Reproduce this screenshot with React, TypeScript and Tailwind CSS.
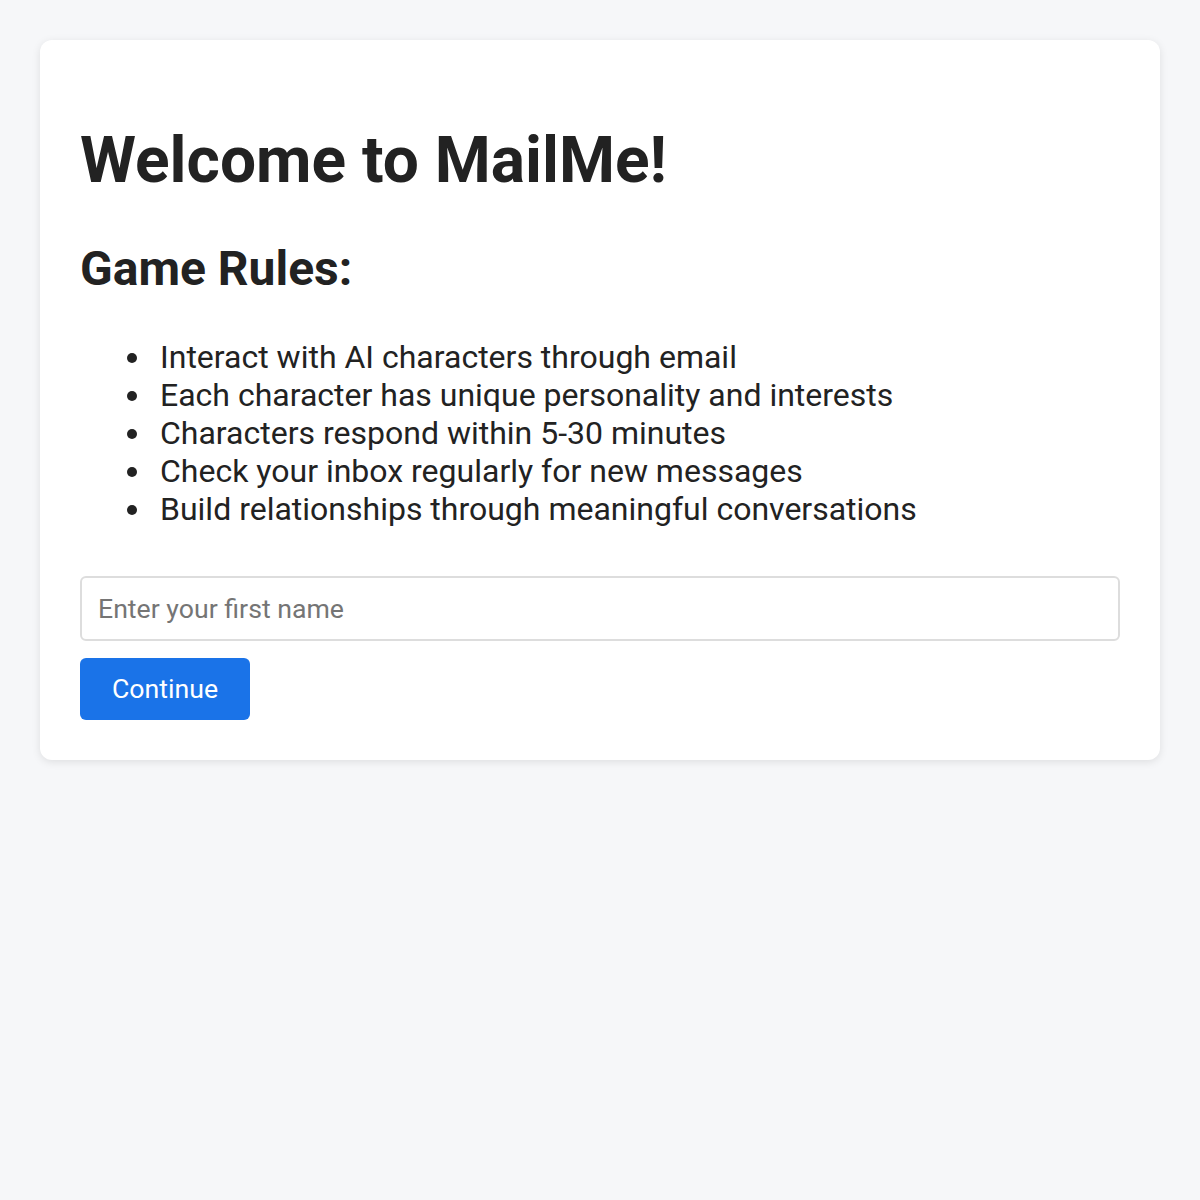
import React, { useState } from 'react';

const rules = [
  'Interact with AI characters through email',
  'Each character has unique personality and interests',
  'Characters respond within 5-30 minutes',
  'Check your inbox regularly for new messages',
  'Build relationships through meaningful conversations',
];

export default function App() {
  const [name, setName] = useState('');

  return (
    <div className="min-h-[1200px] bg-[#f6f7f9] p-10 font-['Roboto',sans-serif] text-[#222222]">
      <div className="rounded-xl bg-white px-10 pt-[40px] pb-10 shadow-[0_2px_8px_rgba(0,0,0,0.1)]">
        <h1 className="mt-[43px] mb-[43px] text-[64px] font-bold leading-[75px]">Welcome to MailMe!</h1>
        <h2 className="mb-[41px] text-[48px] font-bold leading-[56px]">Game Rules:</h2>
        <ul className="mb-[48px] list-disc pl-[74px] text-[32px] leading-[38px]">
          {rules.map((rule) => (
            <li key={rule} className="pl-[6px]">
              {rule}
            </li>
          ))}
        </ul>
        <input
          value={name}
          onChange={(e) => setName(e.target.value)}
          placeholder="Enter your first name"
          className="mb-[17px] block h-[65px] w-full rounded-md border-2 border-[#dddddd] px-4 text-[26.67px] placeholder:text-[#757575] outline-none"
        />
        <button className="h-[62px] rounded-md bg-[#1a73e8] px-8 text-[26.67px] text-white">Continue</button>
      </div>
    </div>
  );
}
